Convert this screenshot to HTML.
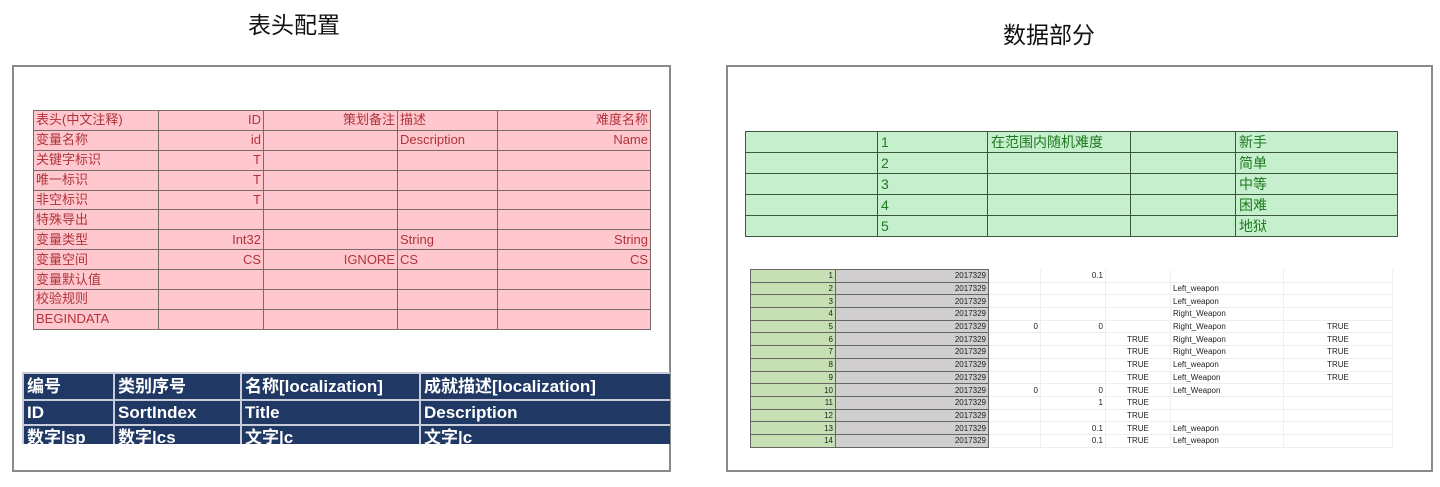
<!DOCTYPE html>
<html><head><meta charset="utf-8"><style>
*{margin:0;padding:0;box-sizing:border-box}
body{width:1440px;height:487px;background:#fff;position:relative;overflow:hidden;font-family:"Liberation Sans","Noto Sans CJK SC",sans-serif}
.t{position:absolute;font-size:23px;color:#111}
.frame{position:absolute;border:2px solid #8a8a8a}
table{position:absolute;border-collapse:collapse;table-layout:fixed}
#pink td{background:#ffc7ce;color:#b0343c;font-size:13px;height:19.9px;border:1px solid #7a6a6a;padding:0 2px;white-space:nowrap;overflow:hidden;line-height:18px}
#navy td{background:#1f3864;color:#fff;font-size:17px;font-weight:bold;border:2px solid #c8ccd8;padding:0 3px;white-space:nowrap;overflow:hidden;line-height:22px}
#green td{background:#c6efce;color:#1e7a1e;font-size:14px;height:21px;border:1px solid #3a5a3a;padding:0 3px;white-space:nowrap;line-height:19px}
#data td{font-size:8px;color:#222;height:12.7px;border-bottom:1px solid #eee;border-right:1px solid #eee;padding:0 2px;line-height:11px;white-space:nowrap;overflow:hidden}
#data td.g{background:#c6e0b4;text-align:right;border:1px solid #666}
#data td.s{background:#d0cece;text-align:right;border:1px solid #666}
.r{text-align:right}.c{text-align:center}
</style></head><body>
<div class="t" style="left:248px;top:6px">表头配置</div>
<div class="t" style="left:1003px;top:16px">数据部分</div>
<div class="frame" style="left:12px;top:65px;width:659px;height:407px"></div>
<div class="frame" style="left:726px;top:65px;width:707px;height:407px"></div>

<table id="pink" style="left:33px;top:110px;width:617px">
<colgroup><col style="width:125px"><col style="width:105px"><col style="width:134px"><col style="width:100px"><col style="width:153px"></colgroup>
<tr><td>表头(中文注释)</td><td class="r">ID</td><td class="r">策划备注</td><td>描述</td><td class="r">难度名称</td></tr>
<tr><td>变量名称</td><td class="r">id</td><td></td><td>Description</td><td class="r">Name</td></tr>
<tr><td>关键字标识</td><td class="r">T</td><td></td><td></td><td></td></tr>
<tr><td>唯一标识</td><td class="r">T</td><td></td><td></td><td></td></tr>
<tr><td>非空标识</td><td class="r">T</td><td></td><td></td><td></td></tr>
<tr><td>特殊导出</td><td></td><td></td><td></td><td></td></tr>
<tr><td>变量类型</td><td class="r">Int32</td><td></td><td>String</td><td class="r">String</td></tr>
<tr><td>变量空间</td><td class="r">CS</td><td class="r">IGNORE</td><td>CS</td><td class="r">CS</td></tr>
<tr><td>变量默认值</td><td></td><td></td><td></td><td></td></tr>
<tr><td>校验规则</td><td></td><td></td><td></td><td></td></tr>
<tr><td>BEGINDATA</td><td></td><td></td><td></td><td></td></tr>
</table>

<div style="position:absolute;left:22px;top:372px;width:648px;height:72px;overflow:hidden">
<table id="navy" style="left:0;top:0;width:648px">
<colgroup><col style="width:91px"><col style="width:127px"><col style="width:179px"><col style="width:251px"></colgroup>
<tr style="height:27px"><td>编号</td><td>类别序号</td><td>名称[localization]</td><td>成就描述[localization]</td></tr>
<tr style="height:25px"><td>ID</td><td>SortIndex</td><td>Title</td><td>Description</td></tr>
<tr style="height:26px"><td>数字|sp</td><td>数字|cs</td><td>文字|c</td><td>文字|c</td></tr>
</table>
</div>

<table id="green" style="left:745px;top:131px;width:652px">
<colgroup><col style="width:132px"><col style="width:110px"><col style="width:143px"><col style="width:105px"><col style="width:162px"></colgroup>
<tr><td></td><td>1</td><td>在范围内随机难度</td><td></td><td>新手</td></tr>
<tr><td></td><td>2</td><td></td><td></td><td>简单</td></tr>
<tr><td></td><td>3</td><td></td><td></td><td>中等</td></tr>
<tr><td></td><td>4</td><td></td><td></td><td>困难</td></tr>
<tr><td></td><td>5</td><td></td><td></td><td>地狱</td></tr>
</table>

<table id="data" style="left:750px;top:269px;width:642px">
<colgroup><col style="width:85px"><col style="width:153px"><col style="width:52px"><col style="width:65px"><col style="width:65px"><col style="width:113px"><col style="width:109px"></colgroup>
<tr><td class="g">1</td><td class="s">2017329</td><td></td><td class="r">0.1</td><td></td><td></td><td></td></tr>
<tr><td class="g">2</td><td class="s">2017329</td><td></td><td></td><td></td><td>Left_weapon</td><td></td></tr>
<tr><td class="g">3</td><td class="s">2017329</td><td></td><td></td><td></td><td>Left_weapon</td><td></td></tr>
<tr><td class="g">4</td><td class="s">2017329</td><td></td><td></td><td></td><td>Right_Weapon</td><td></td></tr>
<tr><td class="g">5</td><td class="s">2017329</td><td class="r">0</td><td class="r">0</td><td></td><td>Right_Weapon</td><td class="c">TRUE</td></tr>
<tr><td class="g">6</td><td class="s">2017329</td><td></td><td></td><td class="c">TRUE</td><td>Right_Weapon</td><td class="c">TRUE</td></tr>
<tr><td class="g">7</td><td class="s">2017329</td><td></td><td></td><td class="c">TRUE</td><td>Right_Weapon</td><td class="c">TRUE</td></tr>
<tr><td class="g">8</td><td class="s">2017329</td><td></td><td></td><td class="c">TRUE</td><td>Left_weapon</td><td class="c">TRUE</td></tr>
<tr><td class="g">9</td><td class="s">2017329</td><td></td><td></td><td class="c">TRUE</td><td>Left_Weapon</td><td class="c">TRUE</td></tr>
<tr><td class="g">10</td><td class="s">2017329</td><td class="r">0</td><td class="r">0</td><td class="c">TRUE</td><td>Left_Weapon</td><td></td></tr>
<tr><td class="g">11</td><td class="s">2017329</td><td></td><td class="r">1</td><td class="c">TRUE</td><td></td><td></td></tr>
<tr><td class="g">12</td><td class="s">2017329</td><td></td><td></td><td class="c">TRUE</td><td></td><td></td></tr>
<tr><td class="g">13</td><td class="s">2017329</td><td></td><td class="r">0.1</td><td class="c">TRUE</td><td>Left_weapon</td><td></td></tr>
<tr><td class="g">14</td><td class="s">2017329</td><td></td><td class="r">0.1</td><td class="c">TRUE</td><td>Left_weapon</td><td></td></tr>
</table>
</body></html>
